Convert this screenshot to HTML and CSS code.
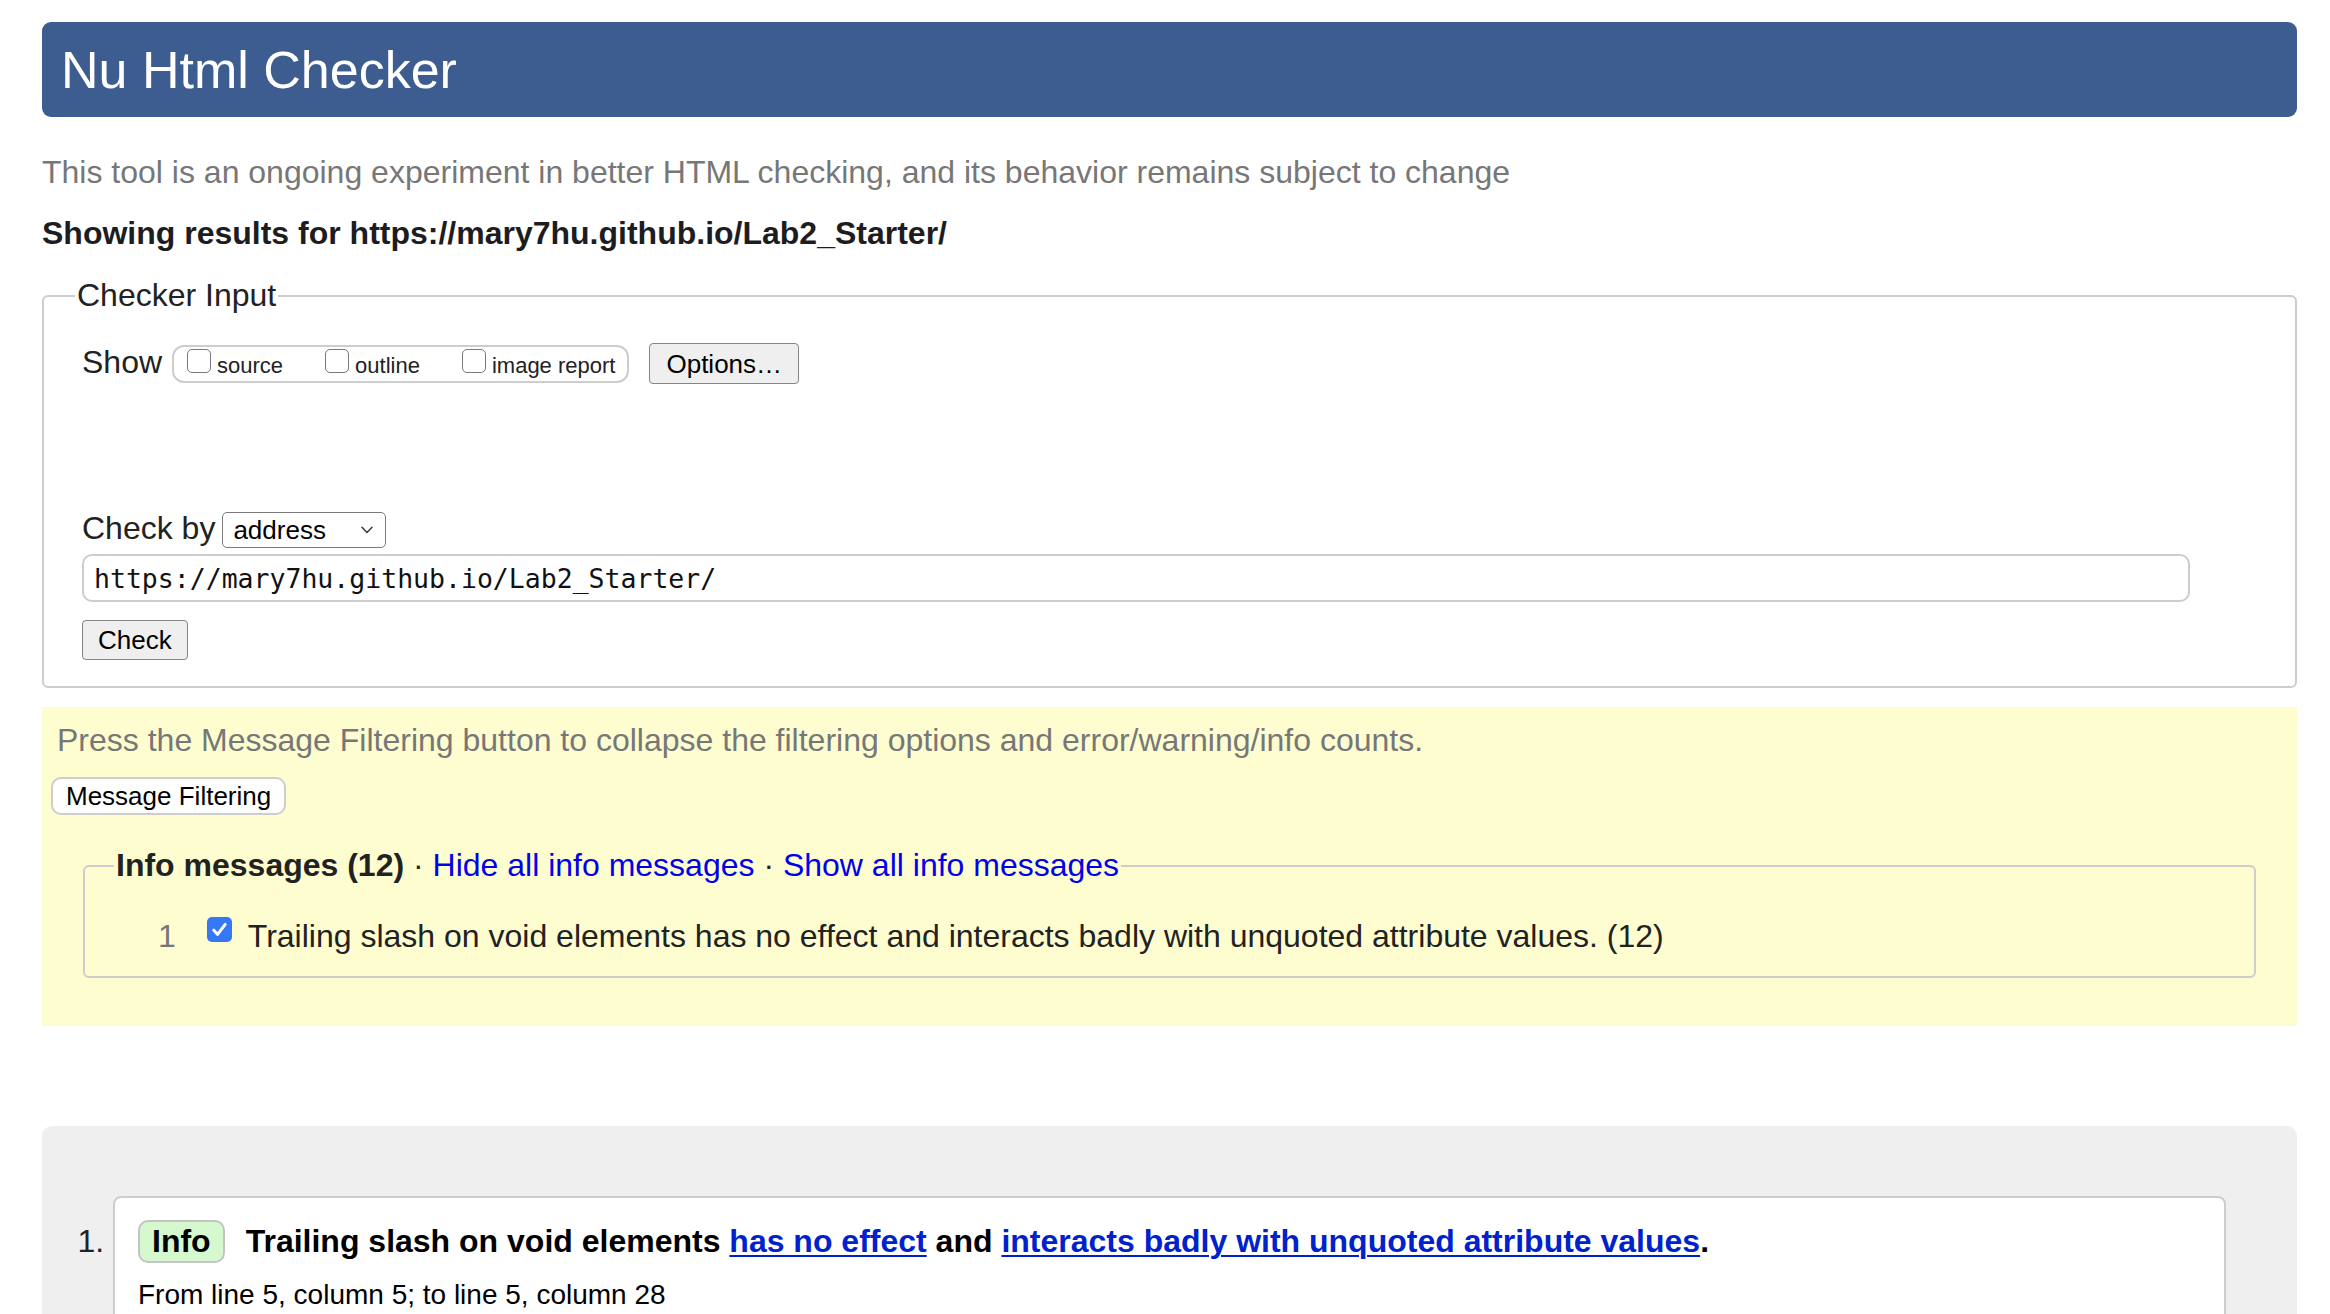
FILE: index.html
```html
<!DOCTYPE html>
<html lang="en">
<head>
<meta charset="utf-8">
<title>Showing results for https://mary7hu.github.io/Lab2_Starter/ - Nu Html Checker</title>
<link rel="stylesheet" href="styles.css">
</head>
<body>
<h1 class="masthead">Nu Html Checker</h1>
<p class="intro">This tool is an ongoing experiment in better HTML checking, and its behavior remains subject to change</p>
<p class="results-for">Showing results for https://mary7hu.github.io/Lab2_Starter/</p>

<form class="checker">
  <fieldset class="checker-input">
    <legend class="checker-legend">Checker Input</legend>
    <div class="show-row">
      <span class="show-label">Show</span>
      <span class="show-group">
        <label class="opt"><span class="cb"></span>source</label>
        <label class="opt"><span class="cb"></span>outline</label>
        <label class="opt"><span class="cb"></span>image report</label>
      </span>
      <button type="button" class="btn btn-options">Options…</button>
    </div>
    <div class="checkby-row">
      <span class="checkby-label">Check by</span>
      <span class="select">address<svg class="chevron" width="12" height="8" viewBox="0 0 12 8"><polyline points="1,1.2 6,6.4 11,1.2" fill="none" stroke="#3a3a3a" stroke-width="1.5" stroke-linecap="round" stroke-linejoin="round"/></svg></span>
    </div>
    <input class="url" type="url" value="https://mary7hu.github.io/Lab2_Starter/">
    <button type="button" class="btn btn-check">Check</button>
  </fieldset>
</form>

<section class="filters">
  <p class="filter-hint">Press the Message Filtering button to collapse the filtering options and error/warning/info counts.</p>
  <button type="button" class="btn-filter">Message Filtering</button>
  <fieldset class="info-set">
    <legend class="info-legend"><strong>Info messages (12)</strong> · <a href="#">Hide all info messages</a> · <a href="#">Show all info messages</a></legend>
    <div class="msg-row">
      <span class="num">1</span><span class="cb cb-on"><svg width="25" height="25" viewBox="0 0 25 25"><path d="M6.8 13.2 L10.6 17.4 L18.2 7.4" fill="none" stroke="#fff" stroke-width="3" stroke-linecap="round" stroke-linejoin="round"/></svg></span><span class="msg-text">Trailing slash on void elements has no effect and interacts badly with unquoted attribute values. (12)</span>
    </div>
  </fieldset>
</section>

<section class="results">
  <ol class="messages">
    <li class="message">
      <p class="msg-head"><span class="badge">Info</span><strong>Trailing slash on void elements <a href="#">has no effect</a> and <a href="#">interacts badly with unquoted attribute values</a>.</strong></p>
      <p class="location">From line 5, column 5; to line 5, column 28</p>
    </li>
  </ol>
</section>
</body>
</html>
```

FILE: styles.css
```css
html {
  overflow: hidden;
}

body {
  margin: 0;
  padding: 22px 33px 0 42px;
  font-family: "Liberation Sans", Arial, Helvetica, sans-serif;
  font-size: 32px;
  line-height: 37px;
  color: #222;
  background: #fff;
}

.masthead {
  margin: 0;
  padding: 19px 19px 18px;
  font-size: 52px;
  line-height: 58px;
  font-weight: normal;
  color: #fff;
  background: #3d5c8f;
  border-radius: 9px;
}

.intro {
  margin: 37px 0 0;
  color: #777;
}

.results-for {
  margin: 24px 0 0;
  font-weight: bold;
  color: #1d1d1f;
}

/* Checker input */
.checker {
  margin: 25px 0 0;
}

.checker-input {
  margin: 0;
  min-width: 0;
  padding: 0 105px 26px 38px;
  border: 2px solid #cdcdcd;
  border-radius: 6px;
}

.checker-legend {
  margin-left: -7px;
  padding: 0 2px;
}

.show-row {
  display: flex;
  align-items: baseline;
  margin-top: 29px;
}

.show-label {
  margin-right: 10px;
}

.show-group {
  display: inline-flex;
  align-items: baseline;
  margin-right: 20px;
  padding: 2px 12px 3px 13px;
  border: 2px solid #cdcdcd;
  border-radius: 12px;
  font-size: 22px;
  line-height: 25px;
}

.opt {
  margin-right: 42px;
}

.opt:last-child {
  margin-right: 0;
}

.cb {
  display: inline-block;
  box-sizing: border-box;
  width: 24px;
  height: 24px;
  margin-right: 6px;
  vertical-align: baseline;
  border: 1.5px solid #7a7a7a;
  border-radius: 5px;
  background: #fff;
}

.btn {
  font-family: "Liberation Sans", Arial, Helvetica, sans-serif;
  font-size: 26px;
  line-height: 30px;
  color: #000;
  background: #efefef;
  border: 1.5px solid #858585;
  border-radius: 4px;
}

.btn-options {
  padding: 4.5px 16px;
}

.checkby-row {
  display: flex;
  align-items: baseline;
  margin-top: 126px;
}

.select {
  display: inline-flex;
  align-items: center;
  justify-content: space-between;
  box-sizing: border-box;
  width: 164px;
  height: 36px;
  margin-left: 7px;
  padding: 0 12px 0 10px;
  border: 1.5px solid #7a7a7a;
  border-radius: 5px;
  font-size: 26px;
  line-height: 30px;
  color: #000;
  background: #fff;
}

.chevron {
  display: block;
}

.url {
  display: block;
  box-sizing: border-box;
  width: 100%;
  height: 48px;
  margin: 6px 0 0;
  padding: 0 10px;
  border: 2px solid #cdcdcd;
  border-radius: 10px;
  font-family: "DejaVu Sans Mono", "Liberation Mono", monospace;
  font-size: 26.5px;
  color: #111;
  background: #fff;
  outline: none;
}

.btn-check {
  display: block;
  margin-top: 18px;
  padding: 4px 15px;
}

/* Message filtering */
.filters {
  margin-top: 19px;
  padding: 15px 9px 48px;
  background: #fdfdd0;
}

.filter-hint {
  margin: 0;
  padding-left: 6px;
  color: #777;
}

.btn-filter {
  display: block;
  margin-top: 18px;
  padding: 2px 13px;
  font-family: "Liberation Sans", Arial, Helvetica, sans-serif;
  font-size: 26px;
  line-height: 30px;
  color: #000;
  background: #fff;
  border: 2px solid #cdcdcd;
  border-radius: 10px;
}

.info-set {
  min-width: 0;
  margin: 32px 32px 0;
  padding: 0 0 21px;
  border: 2px solid #cdcdcd;
  border-radius: 6px;
}

.info-legend {
  margin-left: 29px;
  padding: 0 2px;
}

.info-legend a {
  color: #0000ee;
  text-decoration: none;
}

.msg-row {
  margin-top: 33px;
  padding-left: 73px;
}

.num {
  margin-right: 31px;
  color: #777;
}

.cb-on {
  width: 25px;
  height: 25px;
  margin-right: 16px;
  vertical-align: 5px;
  border: none;
  background: #3478f6;
}

.cb-on svg {
  display: block;
}

/* Results */
.results {
  margin-top: 100px;
  padding: 70px 71px 0;
  background: #efefef;
  border-radius: 10px 10px 0 0;
}

.messages {
  margin: 0;
  padding: 0;
}

.message {
  padding: 22px 21px 80px 23px;
  border: 2px solid #cdcdcd;
  border-radius: 8px;
  background: #fff;
}

.message::marker {
  color: #222;
}

.msg-head {
  margin: 0;
  color: #000;
}

.badge {
  display: inline-block;
  margin-right: 21px;
  padding: 2px 12px;
  line-height: 35px;
  font-weight: bold;
  border: 2px solid #c4c4c4;
  border-radius: 10px;
  background: #d5f8cf;
}

.msg-head a {
  color: #0022cc;
  text-decoration-thickness: 2px;
  text-underline-offset: 3px;
}

.location {
  margin: 16px 0 0;
  font-size: 28px;
  line-height: 32px;
  color: #000;
}
```
